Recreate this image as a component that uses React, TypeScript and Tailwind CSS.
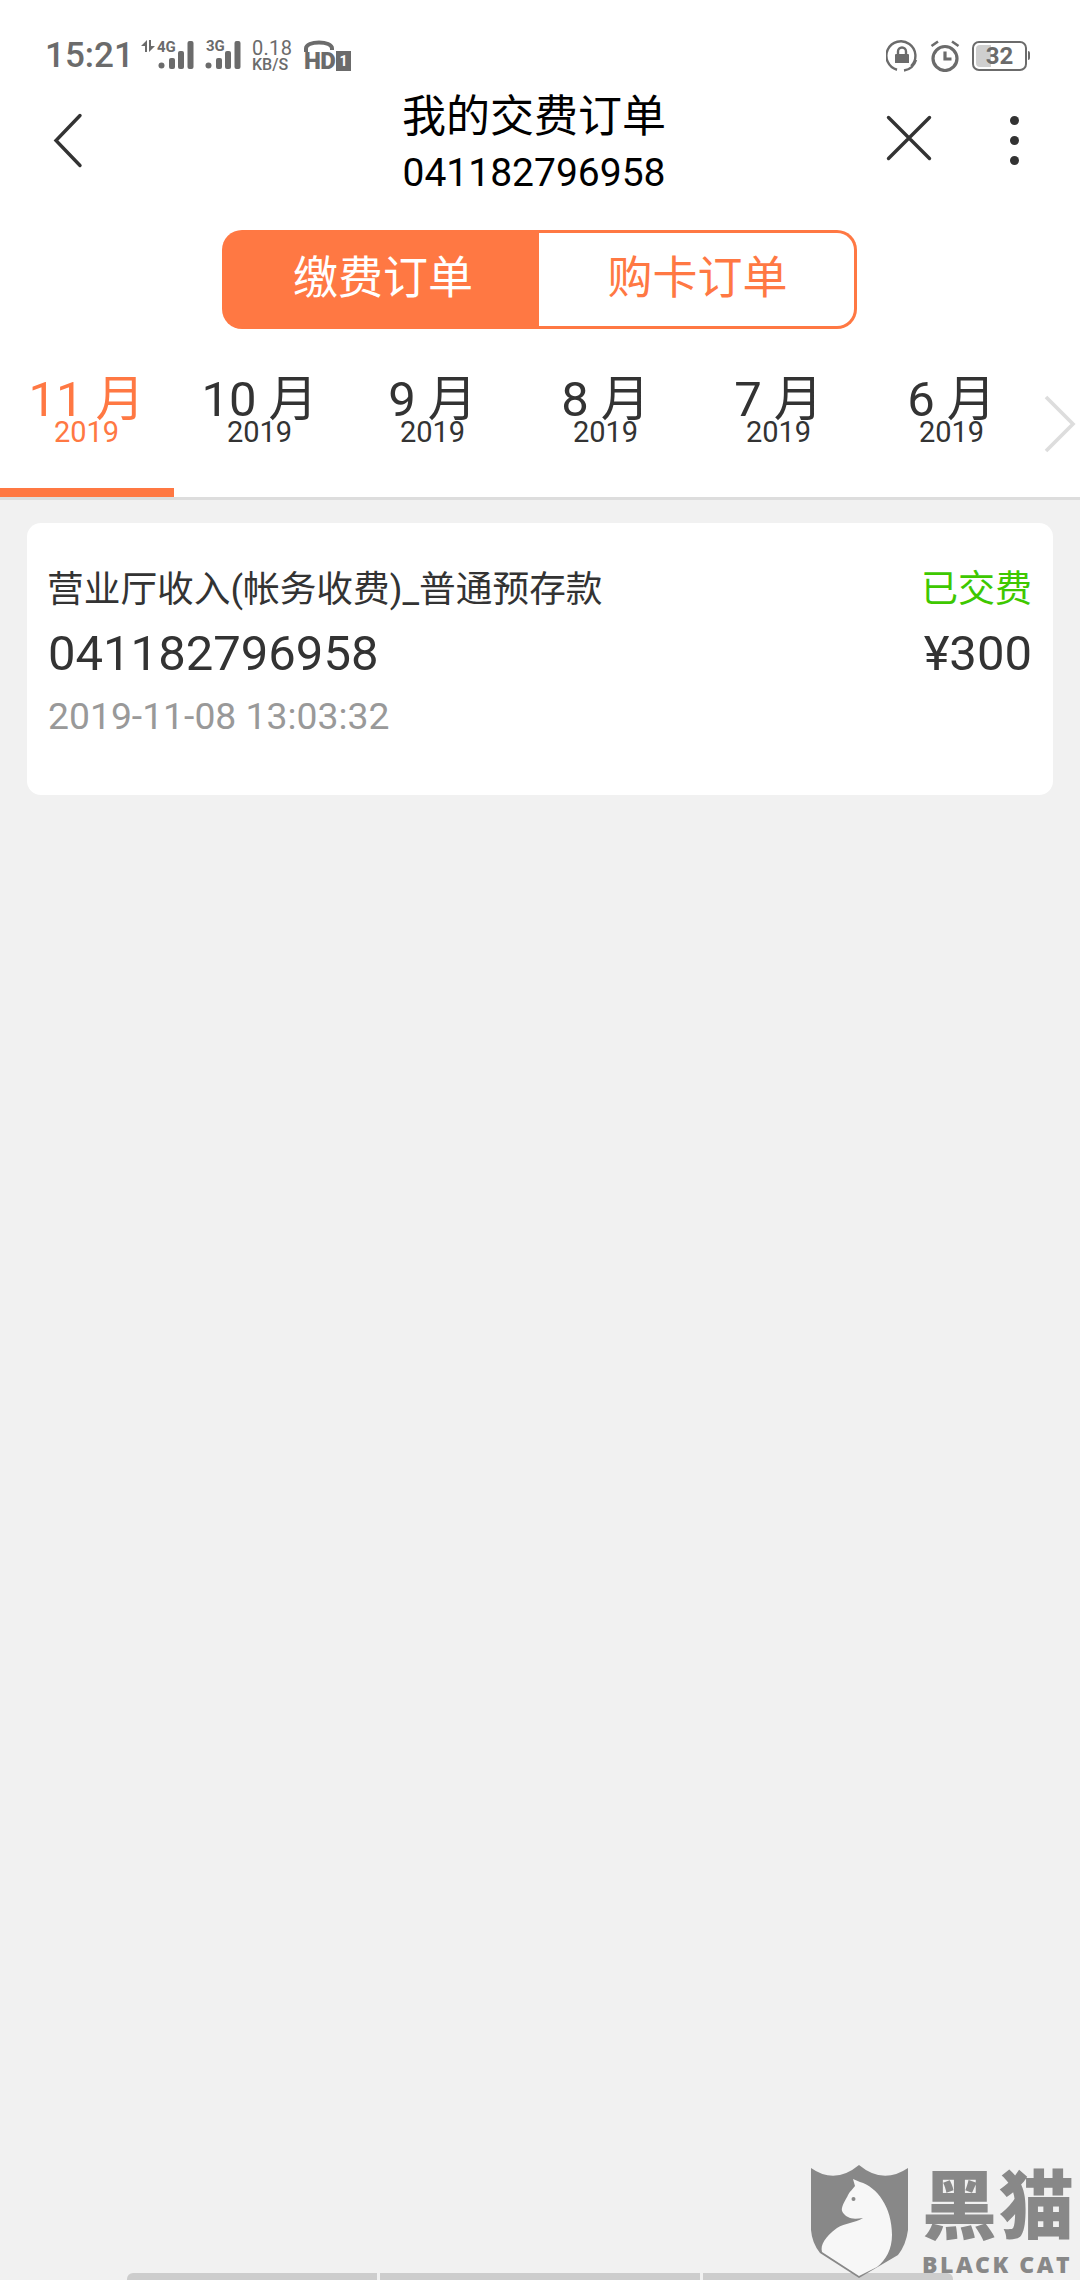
import React from 'react';

const months = ['11', '10', '9', '8', '7', '6'];

const SignalBars: React.FC = () => (
  <svg width="36" height="28" viewBox="0 0 36 28" className="absolute left-0 top-0">
    <circle cx="3.5" cy="24.5" r="3" fill="#6b6b6b" />
    <rect x="11" y="17" width="6" height="11" rx="2" fill="#6b6b6b" />
    <rect x="20" y="10" width="6" height="18" rx="2" fill="#6b6b6b" />
    <rect x="29.5" y="0" width="6" height="28" rx="2" fill="#6b6b6b" />
  </svg>
);

const StatusBar: React.FC = () => (
  <div className="flex h-[85px] items-start pl-[45px] pt-[40px] text-[#6b6b6b]">
    <span className="text-[35px] leading-[32px] font-medium w-[92px]">15:21</span>
    {/* arrows + 4G */}
    <svg width="14" height="12" viewBox="0 0 14 12" className="ml-[4px]">
      <path d="M6 0V12H4V6H0Z M8 0V12L14 6H10V0Z" fill="#6b6b6b" />
    </svg>
    <div className="relative w-[36px] h-[28px] ml-[3px] mt-[1px]">
      <SignalBars />
      <span className="absolute left-[-1px] top-[-2px] text-[15px] leading-[16px] font-bold">4G</span>
    </div>
    <div className="relative w-[36px] h-[28px] ml-[11px] mt-[1px]">
      <SignalBars />
      <span className="absolute left-[1px] top-[-3px] text-[15px] leading-[16px] font-bold">3G</span>
    </div>
    <div className="ml-[11px] flex flex-col w-[42px] items-start">
      <span className="text-[20px] leading-[17px] tracking-[0.3px]">0.18</span>
      <span className="text-[16px] leading-[15px] font-medium">KB/S</span>
    </div>
    <div className="relative ml-[10px] w-[47px] h-[32px]">
      <svg width="30" height="14" viewBox="0 0 30 14" className="absolute left-0 top-0">
        <path d="M2 12V8.5C2 4.5 8 2.5 15 2.5S28 4.5 28 8.5V10" fill="none" stroke="#6b6b6b" strokeWidth="4" />
      </svg>
      <span className="absolute left-0 top-[9px] text-[24px] leading-[24px] font-black tracking-[-0.5px]">HD</span>
      <span className="absolute right-0 top-[11px] w-[15px] h-[20px] bg-[#6b6b6b] text-white text-[14px] leading-[20px] font-bold text-center">1</span>
    </div>
    <div className="ml-auto flex items-start pr-[50px]">
      {/* rotation lock */}
      <svg width="32" height="32" viewBox="0 0 32 32">
        <path d="M27 24A14.5 14.5 0 1 0 14 30.5" fill="none" stroke="#6b6b6b" strokeWidth="2.4" transform="rotate(12 16 16)" />
        <path d="M18 30.5A14.5 14.5 0 0 0 30 20" fill="none" stroke="#6b6b6b" strokeWidth="2.4" />
        <path d="M10 14h12a1 1 0 0 1 1 1v8H9v-8a1 1 0 0 1 1-1Z" fill="#6b6b6b" />
        <path d="M12 14v-2.5a4 4 0 0 1 8 0V14" fill="none" stroke="#6b6b6b" strokeWidth="2.4" />
      </svg>
      {/* alarm */}
      <svg width="30" height="32" viewBox="0 0 30 32" className="ml-[12px]">
        <circle cx="15" cy="18.5" r="12" fill="none" stroke="#6b6b6b" strokeWidth="3.2" />
        <path d="M15 11.5V19H21.5" fill="none" stroke="#6b6b6b" strokeWidth="3.2" />
        <path d="M1.5 6L8 1.5M28.5 6L22 1.5" stroke="#6b6b6b" strokeWidth="2.6" />
      </svg>
      {/* battery */}
      <div className="relative ml-[12px] mt-[1px] w-[55px] h-[30px] rounded-[7px] border-[2px] border-[#6b6b6b]">
        <div className="absolute left-[2px] top-[2px] bottom-[2px] w-[15px] rounded-l-[4px] bg-[#cfcfcf]" />
        <span className="absolute inset-0 text-center text-[24px] leading-[26px] font-bold">32</span>
      </div>
      <div className="ml-[1px] mt-[11px] w-[2px] h-[9px] rounded-r-[2px] bg-[#6b6b6b]" />
    </div>
  </div>
);

const NavBar: React.FC = () => (
  <div className="flex h-[145px] items-start text-black">
    <div className="w-[403px] pl-[50px] pt-[27px]">
      <svg width="34" height="56" viewBox="0 0 34 56">
        <path d="M30 3.5L6 28.5L30 53.5" fill="none" stroke="#333333" strokeWidth="3.4" strokeLinecap="round" strokeLinejoin="miter" />
      </svg>
    </div>
    <div className="w-[262px] flex flex-col items-center pt-[4px] whitespace-nowrap">
      <span className="text-[44px] leading-[56px]">我的交费订单</span>
      <span className="text-[39px] leading-[46px] mt-[5px]">041182796958</span>
    </div>
    <div className="flex-1 flex items-start pl-[221px] pt-[30px]">
      <svg width="46" height="46" viewBox="0 0 46 46">
        <path d="M2.5 2.5L43.5 43.5M43.5 2.5L2.5 43.5" stroke="#333333" strokeWidth="3.4" strokeLinecap="round" />
      </svg>
    </div>
    <div className="w-[70px] pt-[31px] flex-none">
      <div className="flex flex-col gap-[11px] w-[9px]">
        <div className="w-[9px] h-[9px] rounded-full bg-[#333333]" />
        <div className="w-[9px] h-[9px] rounded-full bg-[#333333]" />
        <div className="w-[9px] h-[9px] rounded-full bg-[#333333]" />
      </div>
    </div>
  </div>
);

const App: React.FC = () => {
  return (
    <div className="relative w-[1080px] h-[2280px] overflow-hidden flex flex-col bg-[#f1f1f1] font-['Roboto','Noto_Sans_CJK_SC',sans-serif]">
      {/* Header */}
      <div className="bg-white">
        <StatusBar />
        <NavBar />

        {/* 缴费 / 购卡 */}
        <div className="flex ml-[222px] w-[635px] h-[99px] text-[45px] text-center">
          <div className="w-[317px] pl-[5px] rounded-l-[20px] bg-[#ff7843] text-white leading-[97px]">缴费订单</div>
          <div className="flex-1 pl-[2px] rounded-r-[20px] border-y-[3px] border-r-[3px] border-[#ff7843] text-[#ff7843] leading-[91px]">购卡订单</div>
        </div>

        {/* Months */}
        <div className="flex h-[161px] pt-[49px]">
          {months.map((m, i) => (
            <div key={m} className={`w-[173px] flex flex-col items-center ${i === 0 ? 'text-[#ff7843]' : 'text-[#333333]'}`}>
              <span className="text-[49px] leading-[44px] whitespace-pre">{m} 月</span>
              <span className="text-[29px] leading-[21px]">2019</span>
            </div>
          ))}
          <div className="pl-[6px] pt-[17px]">
            <svg width="32" height="58" viewBox="0 0 32 58">
              <path d="M2 2L29 29L2 56" fill="none" stroke="#dddddd" strokeWidth="3.6" />
            </svg>
          </div>
        </div>
        <div className="w-[174px] h-[9px] bg-[#ff7843] mt-[-2px]" />
      </div>
      <div className="h-[3px] bg-[#dddddd]" />

      {/* Order card */}
      <div className="mx-[27px] mt-[23px] h-[272px] rounded-[14px] bg-white px-[21px] pt-[42px] text-[#333333]">
        <div className="flex justify-between items-start h-[50px]">
          <span className="text-[36.7px] leading-[50px] ml-[-1px]">营业厅收入(帐务收费)_普通预存款</span>
          <span className="text-[37px] leading-[50px] text-[#3ec800]">已交费</span>
        </div>
        <div className="flex justify-between items-start h-[64px] mt-[7px]">
          <span className="text-[49px] leading-[64px]">041182796958</span>
          <span className="text-[49px] leading-[64px]">¥300</span>
        </div>
        <div className="text-[37.3px] leading-[50px] text-[#999999] mt-[5px]">2019-11-08 13:03:32</div>
      </div>

      {/* Bottom bar peeking in */}
      <div className="mt-auto ml-[127px] flex gap-[3px] h-[7px]">
        <div className="w-[250px] rounded-tl-[6px] bg-[#cdcdcd]" />
        <div className="w-[320px] bg-[#cdcdcd]" />
        <div className="w-[250px] rounded-tr-[6px] bg-[#cdcdcd]" />
      </div>

      {/* Watermark */}
      <div className="absolute left-[811px] top-[2165px] flex text-[#888888]">
        <svg width="97" height="114" viewBox="0 0 97 114">
          <path d="M0 3Q24 20 48 0Q72 20 97 3V65Q95 80 87 90L48 113L9 88Q1 78 0 65Z" fill="#888888" />
          <path d="M42 14L49 17C66 22 81 42 81 70C81 84 75 95 66 102L48 111L11 87C9 80 14 72 26 63C34 58 44 58 52 53C45 54 40 54 37 52C33 50 30 46 31 43C32 38 36 33 37 30C39 26 42 24 44 21Z" fill="#f7f7f7" />
          <circle cx="42.5" cy="34" r="2" fill="#888888" />
        </svg>
        <div className="ml-[14px] flex flex-col w-[158px]">
          <span className="text-[75px] leading-[80px] font-black tracking-[2px] whitespace-nowrap mt-[2px]">黑猫</span>
          <span className="text-[23px] leading-[22px] font-black tracking-[2.5px] whitespace-nowrap mt-[6px] font-['Open_Sans',sans-serif]">BLACK CAT</span>
        </div>
      </div>
    </div>
  );
};

export default App;
